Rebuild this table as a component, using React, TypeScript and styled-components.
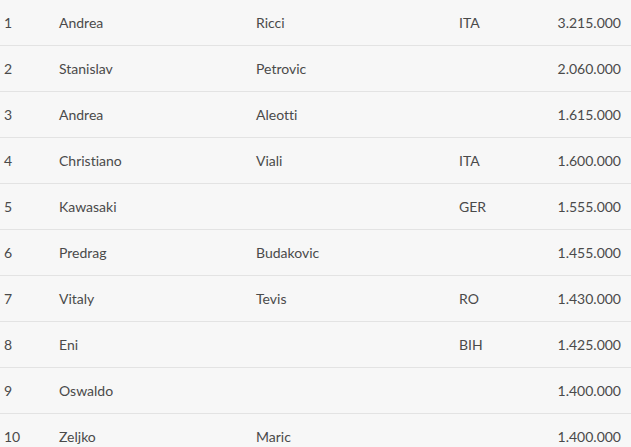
import { createGlobalStyle } from "styled-components";
import styled from "styled-components";

const GlobalStyle = createGlobalStyle`
	html, body {
		margin: 0;
		padding: 0;
		background: #f7f7f7;
	}
	body {
		font-family: Lato, "Open Sans", sans-serif;
	}
`;

interface Player {
	rank: number;
	first: string;
	last: string;
	country: string;
	value: string;
}

const players: Player[] = [
	{ rank: 1, first: "Andrea", last: "Ricci", country: "ITA", value: "3.215.000" },
	{ rank: 2, first: "Stanislav", last: "Petrovic", country: "", value: "2.060.000" },
	{ rank: 3, first: "Andrea", last: "Aleotti", country: "", value: "1.615.000" },
	{ rank: 4, first: "Christiano", last: "Viali", country: "ITA", value: "1.600.000" },
	{ rank: 5, first: "Kawasaki", last: "", country: "GER", value: "1.555.000" },
	{ rank: 6, first: "Predrag", last: "Budakovic", country: "", value: "1.455.000" },
	{ rank: 7, first: "Vitaly", last: "Tevis", country: "RO", value: "1.430.000" },
	{ rank: 8, first: "Eni", last: "", country: "BIH", value: "1.425.000" },
	{ rank: 9, first: "Oswaldo", last: "", country: "", value: "1.400.000" },
	{ rank: 10, first: "Zeljko", last: "Maric", country: "", value: "1.400.000" },
];

const Table = styled.div`
	width: 631px;
	background: #f7f7f7;
`;

const Row = styled.div`
	display: grid;
	grid-template-columns: 55px 197px 203px 80px 1fr;
	height: 45px;
	align-items: center;
	border-bottom: 1px solid #e3e3e3;
	color: #4a4a4a;
	font-size: 14px;
	font-variant-ligatures: none;
`;

const Cell = styled.div<{ $right?: boolean }>`
	padding-left: ${(props) => (props.$right ? "0" : "4px")};
	padding-right: ${(props) => (props.$right ? "10px" : "0")};
	text-align: ${(props) => (props.$right ? "right" : "left")};
	white-space: nowrap;
`;

export default function App() {
	return (
		<>
			<GlobalStyle />
			<Table>
				{players.map((p) => (
					<Row key={p.rank}>
						<Cell>{p.rank}</Cell>
						<Cell>{p.first}</Cell>
						<Cell>{p.last}</Cell>
						<Cell>{p.country}</Cell>
						<Cell $right>{p.value}</Cell>
					</Row>
				))}
			</Table>
		</>
	);
}
